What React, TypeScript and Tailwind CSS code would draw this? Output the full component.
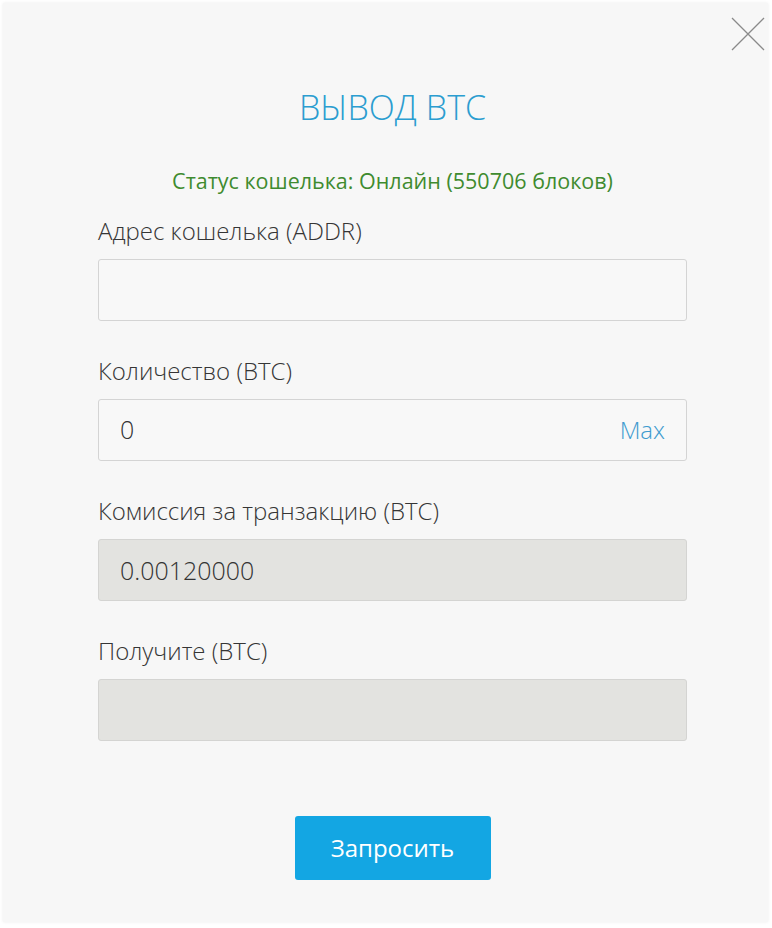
const font = { fontFamily: '"Open Sans", "Noto Sans", sans-serif' };

function Field({ label, children }: { label: string; children: React.ReactNode }) {
  return (
    <div className="flex flex-col">
      <label className="h-[28px] text-[24px] leading-[28px] font-light text-[#353535]">{label}</label>
      <div className="mt-[14px]">{children}</div>
    </div>
  );
}

export default function App() {
  return (
    <div className="min-h-[928px] w-[772px] bg-white p-[3px]" style={font}>
      <div className="relative h-[919px] w-[765px] bg-[#f7f7f7] shadow-[0_0_3px_rgba(0,0,0,0.08)]">
        {/* close */}
        <button type="button" className="absolute right-[3px] top-[14px] h-[34px] w-[34px] text-[#8a8a8a]">
          <svg viewBox="0 0 34 34" className="h-full w-full" fill="none" stroke="currentColor" strokeWidth="1.3">
            <path d="M1 1 L33 33 M33 1 L1 33" />
          </svg>
        </button>

        <div className="ml-[95px] w-[589px] pt-[80px]">
          <h1 className="text-center text-[34px] leading-[48px] font-light text-[#2b9dd0]">ВЫВОД BTC</h1>
          <p className="mt-[37px] text-center text-[21.5px] leading-[26px] text-[#3f8b2f]">
            Статус кошелька: Онлайн (550706 блоков)
          </p>

          <div className="mt-[23px] flex flex-col gap-[36px]">
            <Field label="Адрес кошелька (ADDR)">
              <input className="h-[62px] w-full rounded-[3px] border border-[#d4d4d4] bg-[#f8f8f8] px-[21px] text-[25px] text-[#333] outline-none" />
            </Field>
            <Field label="Количество (BTC)">
              <div className="flex h-[62px] w-full items-center rounded-[3px] border border-[#d4d4d4] bg-[#f8f8f8] px-[21px]">
                <input defaultValue="0" className="min-w-0 flex-1 bg-transparent text-[25px] font-light text-[#333] outline-none" />
                <span className="text-[24px] font-light text-[#3e9bcf]">Max</span>
              </div>
            </Field>
            <Field label="Комиссия за транзакцию (BTC)">
              <input readOnly defaultValue="0.00120000" className="h-[62px] w-full rounded-[3px] border border-[#d4d4d2] bg-[#e3e3e0] px-[21px] text-[25px] font-light text-[#333] outline-none" />
            </Field>
            <Field label="Получите (BTC)">
              <input readOnly className="h-[62px] w-full rounded-[3px] border border-[#d4d4d2] bg-[#e3e3e0] px-[21px] text-[25px] font-light text-[#333] outline-none" />
            </Field>
          </div>

          <div className="mt-[75px] flex justify-center">
            <button type="button" className="h-[64px] w-[196px] rounded-[3px] bg-[#13a6e3] text-[24px] font-normal text-white">
              Запросить
            </button>
          </div>
        </div>
      </div>
    </div>
  );
}
